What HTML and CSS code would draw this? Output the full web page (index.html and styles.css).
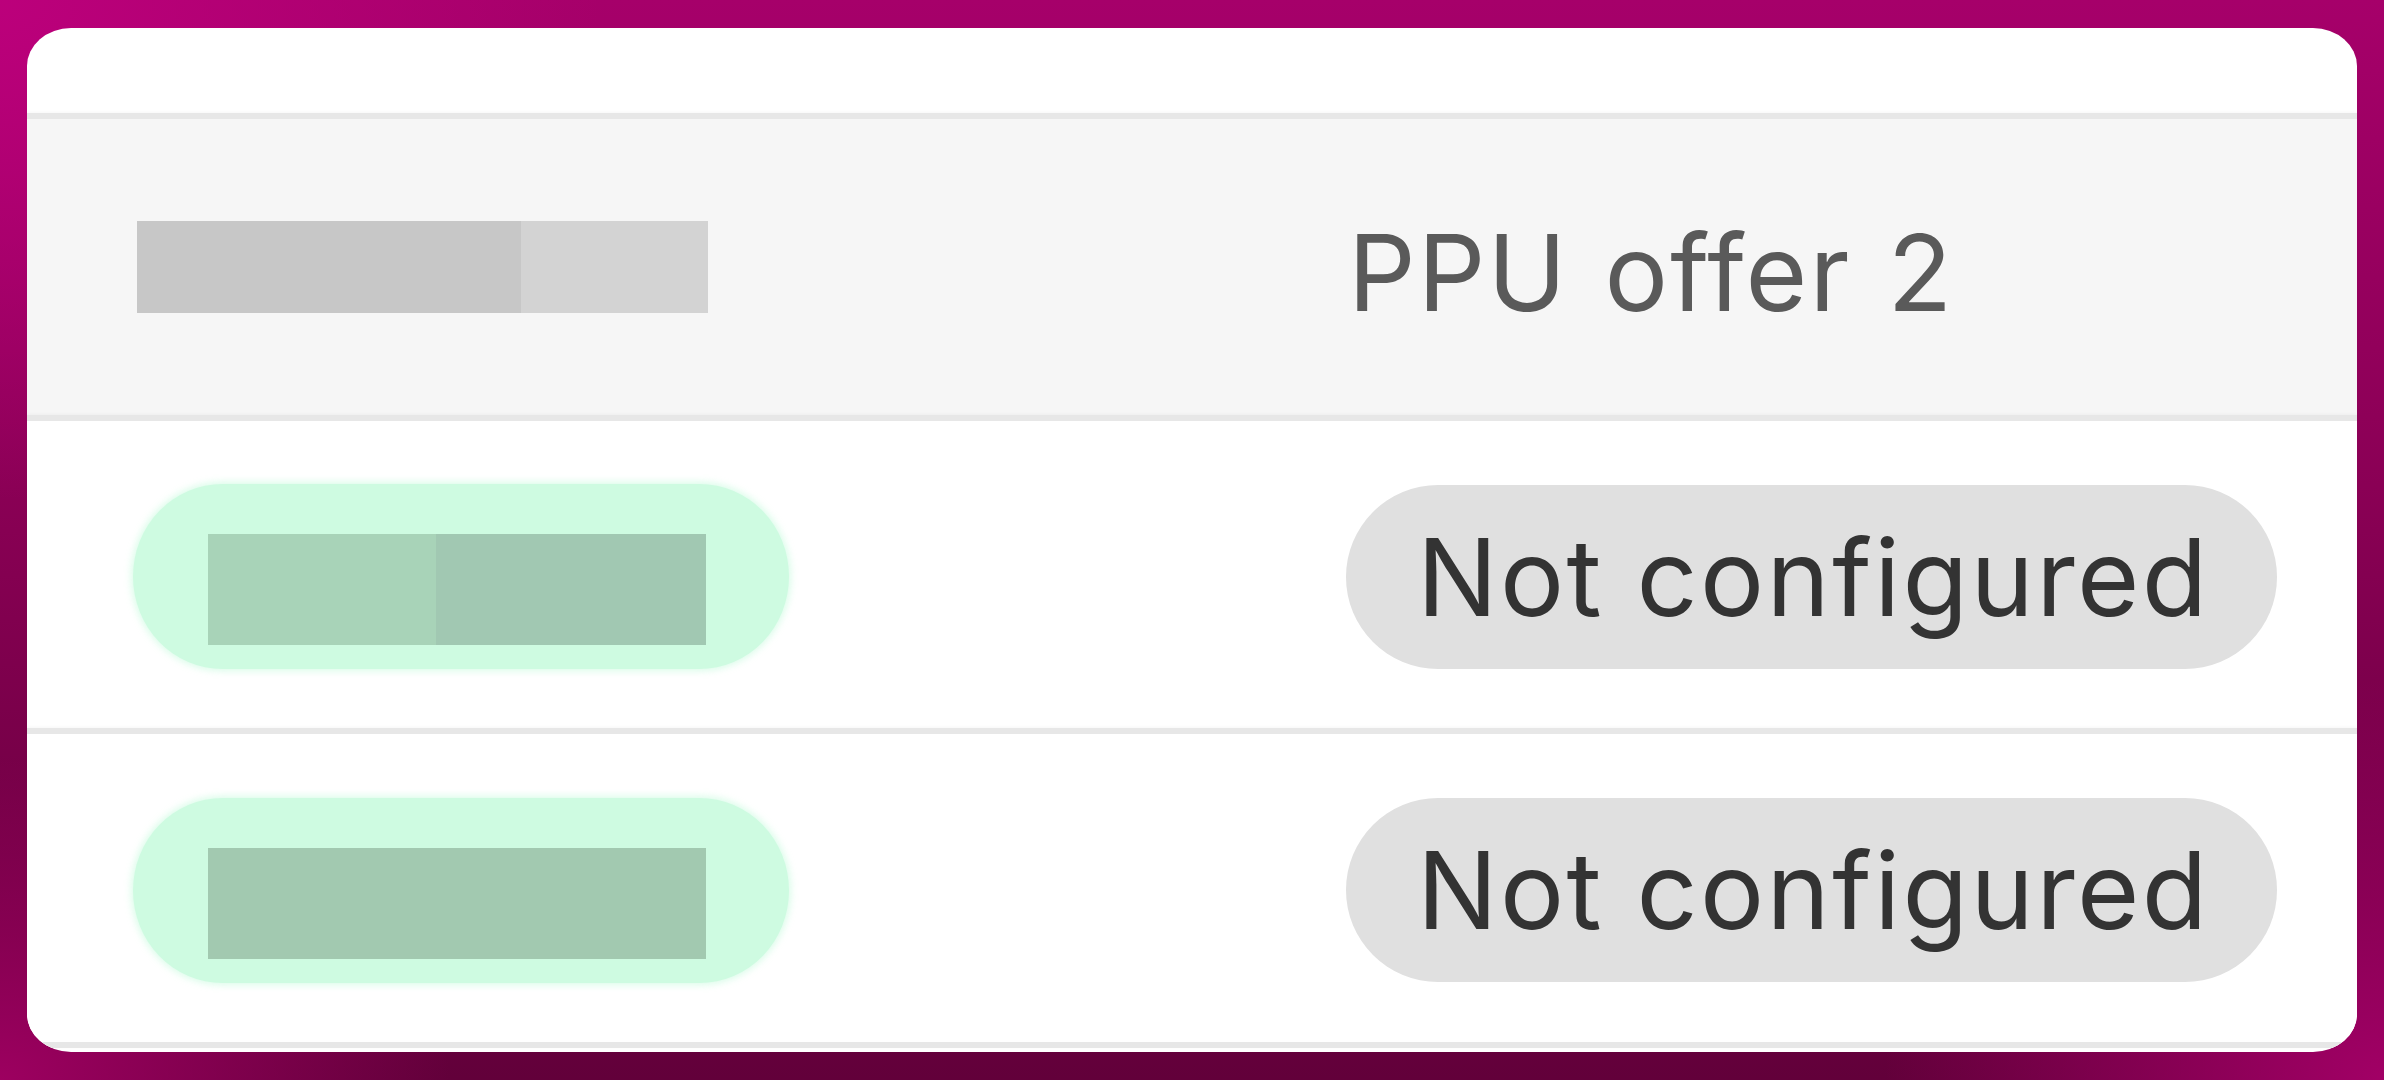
FILE: index.html
```html
<!DOCTYPE html>
<html lang="en">
<head>
<meta charset="utf-8">
<title>Offers</title>
<link rel="stylesheet" href="styles.css">
</head>
<body>
<div class="frame">
  <div class="card">
    <div class="table">
      <div class="row head">
        <div class="cell">
          <div class="redact">
            <span class="seg seg-a"></span><span class="seg seg-b"></span>
          </div>
        </div>
        <div class="cell">
          <span class="head-title">PPU offer 2</span>
        </div>
      </div>
      <div class="row row-1">
        <div class="cell">
          <div class="pill-green">
            <div class="redact-green">
              <span class="gseg gseg-a"></span><span class="gseg gseg-b"></span>
            </div>
          </div>
        </div>
        <div class="cell">
          <span class="pill-gray">Not configured</span>
        </div>
      </div>
      <div class="row row-2">
        <div class="cell">
          <div class="pill-green">
            <div class="redact-green">
              <span class="gseg gseg-full"></span>
            </div>
          </div>
        </div>
        <div class="cell">
          <span class="pill-gray">Not configured</span>
        </div>
      </div>
    </div>
  </div>
</div>
</body>
</html>
```
FILE: styles.css
```css
html, body {
  margin: 0;
  padding: 0;
  width: 2384px;
  height: 1080px;
  overflow: hidden;
}

body {
  font-family: "Inter", "Roboto", "Liberation Sans", sans-serif;
  background:
    radial-gradient(ellipse 600px 500px at 0 0, rgba(190, 0, 125, 0.9), rgba(190, 0, 125, 0) 100%),
    radial-gradient(ellipse 500px 400px at 100% 100%, rgba(165, 0, 104, 0.95), rgba(165, 0, 104, 0) 100%),
    radial-gradient(ellipse 450px 320px at 0 100%, rgba(160, 0, 98, 0.95), rgba(160, 0, 98, 0) 100%),
    linear-gradient(180deg, #a6006a 0%, #8a0055 45%, #62003a 100%);
}

.frame {
  padding: 28px 27px 0 27px;
}

.card {
  height: 1024px;
  background: #ffffff;
  border-radius: 44px / 38px;
  overflow: hidden;
  padding-top: 85px;
  box-sizing: border-box;
}

.table {
  display: flex;
  flex-direction: column;
}

.row {
  display: grid;
  grid-template-columns: 1213px 1fr;
  align-items: center;
  padding-left: 106px;
  border-top: 6px solid #e7e7e7;
  box-shadow: 0 -1px 3px rgba(0, 0, 0, 0.03);
}

.head {
  height: 296px;
  background: #f6f6f6;
}

.row-1 {
  height: 307px;
  background: #ffffff;
}

.row-2 {
  height: 308px;
  background: #ffffff;
  border-bottom: 6px solid #e7e7e7;
}

.cell {
  display: flex;
  align-items: center;
}

.redact {
  display: flex;
  margin-left: 4px;
  height: 92px;
}

.seg {
  display: block;
  height: 100%;
}

.seg-a {
  width: 384px;
  background: #c7c7c7;
}

.seg-b {
  width: 187px;
  background: #d3d3d3;
}

.head-title {
  font-size: 106px;
  line-height: 1;
  color: #5a5a5a;
  margin-left: 2px;
  margin-top: 12px;
  letter-spacing: 2.1px;
  word-spacing: 4px;
}

.pill-green {
  width: 656px;
  height: 185px;
  border-radius: 92px / 95px;
  background: #cefbe1;
  box-shadow: 0 0 7px 2px rgba(206, 251, 225, 0.75);
  display: flex;
  align-items: flex-start;
  padding-left: 75px;
  padding-top: 50px;
  box-sizing: border-box;
  margin-top: 4px;
}

.redact-green {
  display: flex;
  height: 111px;
}

.gseg {
  display: block;
  height: 100%;
}

.gseg-a {
  width: 228px;
  background: #a8d3b8;
}

.gseg-b {
  width: 270px;
  background: #a1c8b2;
}

.gseg-full {
  width: 498px;
  background: #a2c9b0;
}

.pill-gray {
  display: inline-block;
  height: 184px;
  line-height: 184px;
  padding: 0 67px 0 71px;
  border-radius: 92px;
  background: #e0e0e0;
  font-size: 107px;
  color: #333333;
  letter-spacing: 2.4px;
  white-space: nowrap;
  margin-top: 4px;
}
```
